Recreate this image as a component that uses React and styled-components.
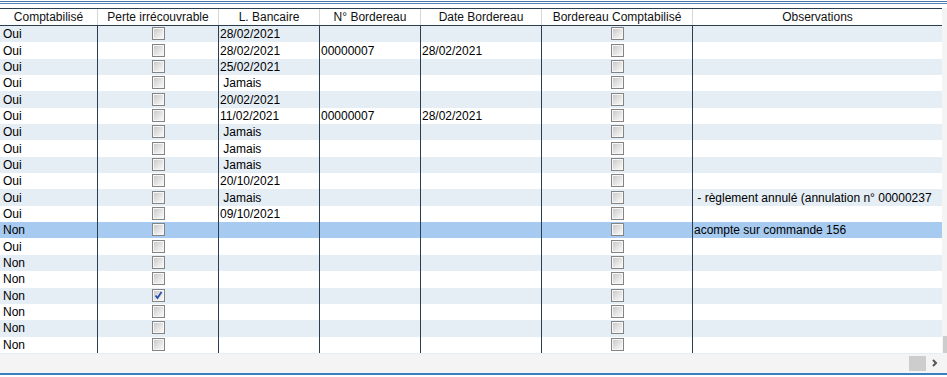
import React from 'react'
import styled, { createGlobalStyle } from 'styled-components'

const GlobalStyle = createGlobalStyle`
  body {
    margin: 0;
    background: #fff;
    font-family: 'Liberation Sans', Arial, sans-serif;
  }
`

const COLS = '97px 121px 101px 101px 121px 151px 250px'
const DARK = '#2b3e51'

const Frame = styled.div`
  width: 947px;
  height: 377px;
  display: flex;
  flex-direction: column;
  overflow: hidden;
`

const TopRule = styled.div`
  height: 8px;
  padding-top: 1px;
  box-sizing: border-box;
  display: flex;
  flex-direction: column;
  gap: 1px;
`

const RuleLine = styled.div`
  height: 1px;
  background: ${props => props.$color};
`

const Middle = styled.div`
  display: flex;
`

const Table = styled.div`
  width: 942px;
  display: flex;
  flex-direction: column;
  border-bottom: 1px solid #e6edf4;
`

const HeaderRow = styled.div`
  display: grid;
  grid-template-columns: ${COLS};
  height: 18px;
  box-sizing: border-box;
  border-top: 1px solid ${DARK};
  border-bottom: 1px solid ${DARK};
  background: #fff;
`

const HeaderCell = styled.div`
  box-sizing: border-box;
  font-size: 12px;
  color: #111;
  text-align: center;
  line-height: 16px;
  white-space: nowrap;
  overflow: hidden;
  &:not(:first-child) {
    border-left: 1px solid #d6d6d6;
  }
`

const Rows = styled.div`
  display: flex;
  flex-direction: column;
`

const Row = styled.div`
  display: grid;
  grid-template-columns: ${COLS};
  height: 16.35px;
  background: ${props => props.$selected ? '#a7cbf0' : props.$alt ? '#e5edf5' : '#fff'};
`

const Cell = styled.div`
  box-sizing: border-box;
  display: flex;
  align-items: center;
  justify-content: ${props => props.$center ? 'center' : 'flex-start'};
  padding-left: ${props => props.$pad || 0}px;
  font-size: 12px;
  color: #000;
  white-space: pre;
  overflow: hidden;
  &:not(:first-child) {
    border-left: 1px solid ${DARK};
  }
`

const Box = styled.span`
  width: 13px;
  height: 13px;
  box-sizing: border-box;
  border: 1px solid #848484;
  background: linear-gradient(135deg, #c4c4c4 0%, #e2e2e2 50%, #fdfdfd 100%);
  box-shadow: inset 0 0 0 1px #f6f6f6;
  display: flex;
  align-items: center;
  justify-content: center;
  margin-top: -1px;
`

const VScroll = styled.div`
  flex: 1;
  display: flex;
  flex-direction: column;
  padding-left: 1px;
  background: #f4f4f4;
`

const VThumb = styled.div`
  margin-top: auto;
  height: 17px;
  margin-bottom: 1px;
  background: #cdcdcd;
`

const HScroll = styled.div`
  height: 19px;
  background: #f4f4f4;
  display: flex;
  align-items: center;
  justify-content: flex-end;
  padding-right: 9px;
  gap: 6px;
`

const HThumb = styled.div`
  width: 17px;
  height: 15px;
  background: #cdcdcd;
`

const BottomRule = styled.div`
  height: 2px;
  background: #3b7dc0;
`

const Checkbox = ({ checked }) => (
  <Box>
    {checked && (
      <svg width="9" height="9" viewBox="0 0 9 9">
        <polyline points="1.5,4.5 3.5,7 7.5,1" fill="none" stroke="#2a4fb0" strokeWidth="1.8" />
      </svg>
    )}
  </Box>
)

const headers = [
  'Comptabilisé',
  'Perte irrécouvrable',
  'L. Bancaire',
  'N° Bordereau',
  'Date Bordereau',
  'Bordereau Comptabilisé',
  'Observations'
]

const data = [
  { c: 'Oui', bank: '28/02/2021' },
  { c: 'Oui', bank: '28/02/2021', num: '00000007', date: '28/02/2021' },
  { c: 'Oui', bank: '25/02/2021' },
  { c: 'Oui', bank: ' Jamais' },
  { c: 'Oui', bank: '20/02/2021' },
  { c: 'Oui', bank: '11/02/2021', num: '00000007', date: '28/02/2021' },
  { c: 'Oui', bank: ' Jamais' },
  { c: 'Oui', bank: ' Jamais' },
  { c: 'Oui', bank: ' Jamais' },
  { c: 'Oui', bank: '20/10/2021' },
  { c: 'Oui', bank: ' Jamais', obs: ' - règlement annulé (annulation n° 00000237' },
  { c: 'Oui', bank: '09/10/2021' },
  { c: 'Non', selected: true, obs: 'acompte sur commande 156' },
  { c: 'Oui' },
  { c: 'Non' },
  { c: 'Non' },
  { c: 'Non', lost: true },
  { c: 'Non' },
  { c: 'Non' },
  { c: 'Non' }
]

export default function App () {
  return (
    <Frame>
      <GlobalStyle />
      <TopRule>
        <RuleLine $color='#4877ad' />
        <RuleLine $color='#5a86ba' />
      </TopRule>
      <Middle>
        <Table>
          <HeaderRow>
            {headers.map(h => <HeaderCell key={h}>{h}</HeaderCell>)}
          </HeaderRow>
          <Rows>
            {data.map((r, i) => (
              <Row key={i} $alt={i % 2 === 0} $selected={r.selected}>
                <Cell $pad={3}>{r.c}</Cell>
                <Cell $center><Checkbox checked={r.lost} /></Cell>
                <Cell $pad={1}>{r.bank || ''}</Cell>
                <Cell $pad={1}>{r.num || ''}</Cell>
                <Cell $pad={1}>{r.date || ''}</Cell>
                <Cell $center><Checkbox /></Cell>
                <Cell $pad={1}>{r.obs || ''}</Cell>
              </Row>
            ))}
          </Rows>
        </Table>
        <VScroll>
          <VThumb />
        </VScroll>
      </Middle>
      <HScroll>
        <HThumb />
        <svg width="6" height="8" viewBox="0 0 6 8">
          <polyline points="1,1 4,4 1,7" fill="none" stroke="#555" strokeWidth="2" />
        </svg>
      </HScroll>
      <BottomRule />
    </Frame>
  )
}
